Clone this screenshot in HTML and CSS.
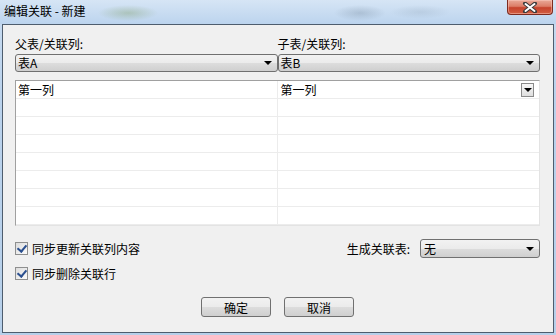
FILE: index.html
```html
<!DOCTYPE html>
<html lang="zh">

<head>
    <meta charset="UTF-8">
    <title>编辑关联 - 新建</title>
    <link rel="stylesheet" href="styles.css">
</head>

<body>
    <div class="window">
        <div class="titlebar">
            <span class="title">编辑关联 - 新建</span>
            <button class="btn-close" type="button">
                <svg width="16" height="11" viewBox="0 0 16 11">
                    <path d="M3 1.5 L13 9.5 M13 1.5 L3 9.5" stroke="#3b3b3b" stroke-width="4" stroke-linecap="round" />
                    <path d="M3.5 2 L12.5 9 M12.5 2 L3.5 9" stroke="#ffffff" stroke-width="2" stroke-linecap="round" />
                </svg>
            </button>
        </div>

        <div class="client">
            <div class="pair">
                <div class="pair-col">
                    <label class="field-label">父表/关联列:</label>
                    <div class="combo"><span>表A</span><i class="arrow"></i></div>
                </div>
                <div class="pair-col">
                    <label class="field-label">子表/关联列:</label>
                    <div class="combo"><span>表B</span><i class="arrow"></i></div>
                </div>
            </div>

            <div class="grid">
                <div class="grid-row">
                    <div class="cell">第一列</div>
                    <div class="cell cell-edit">第一列<span class="cell-drop"><i class="arrow"></i></span></div>
                </div>
                <div class="grid-row"><div class="cell"></div><div class="cell"></div></div>
                <div class="grid-row"><div class="cell"></div><div class="cell"></div></div>
                <div class="grid-row"><div class="cell"></div><div class="cell"></div></div>
                <div class="grid-row"><div class="cell"></div><div class="cell"></div></div>
                <div class="grid-row"><div class="cell"></div><div class="cell"></div></div>
                <div class="grid-row"><div class="cell"></div><div class="cell"></div></div>
                <div class="grid-row"><div class="cell"></div><div class="cell"></div></div>
            </div>

            <div class="options-row">
                <label class="check"><span class="box"></span>同步更新关联列内容</label>
                <div class="gen">
                    <span class="gen-label">生成关联表:</span>
                    <div class="combo combo-small"><span>无</span><i class="arrow"></i></div>
                </div>
            </div>
            <div class="options-row second">
                <label class="check"><span class="box"></span>同步删除关联行</label>
            </div>

            <div class="buttons">
                <button type="button" class="btn">确定</button>
                <button type="button" class="btn">取消</button>
            </div>
        </div>
    </div>
</body>

</html>
```

FILE: styles.css
```css
:root {
    --face: #f0f0f0;
    --frame: #bcd3ec;
    --text: #000;
    --grid-line: #ececec;
}

* {
    box-sizing: border-box;
}

body {
    margin: 0;
    font-family: "Noto Sans CJK SC", "Liberation Sans", sans-serif;
    font-size: 12px;
    color: var(--text);
}

.window {
    width: 556px;
    height: 335px;
    background: linear-gradient(to bottom, #c9dcf1 0%, #bad2ec 30%, #b7d0ea 100%);
    display: flex;
    flex-direction: column;
}

/* 标题栏 */
.titlebar {
    height: 24px;
    display: flex;
    align-items: flex-start;
    background:
        radial-gradient(ellipse 30px 8px at 128px 13px, rgba(120, 150, 90, 0.35), transparent),
        radial-gradient(ellipse 26px 8px at 360px 13px, rgba(90, 110, 130, 0.25), transparent),
        radial-gradient(ellipse 30px 7px at 420px 12px, rgba(150, 170, 190, 0.3), transparent),
        linear-gradient(to bottom, #d6e5f5, #bcd4ee);
}

.title {
    padding: 3px 0 0 4px;
    font-size: 12px;
    line-height: 16px;
    color: #000;
}

.btn-close {
    margin-left: auto;
    margin-right: 3px;
    width: 46px;
    height: 15px;
    padding: 0;
    border: 1px solid #7d2b1f;
    border-top: none;
    border-radius: 0 0 4px 4px;
    background: linear-gradient(to bottom, #e9a998 0%, #dc7d67 45%, #c6432c 55%, #d25f43 100%);
    box-shadow: inset 0 0 0 1px rgba(255, 210, 200, 0.45);
    display: flex;
    justify-content: center;
    align-items: center;
}

/* 客户区 */
.client {
    flex: 1;
    margin: 0 2px 2px 2px;
    background: var(--face);
    border: 1px solid #4e5d6e;
    padding: 12px 13px 0 12px;
    display: flex;
    flex-direction: column;
}

.pair {
    display: flex;
}

.pair-col {
    flex: 1;
    display: flex;
    flex-direction: column;
    gap: 3px;
}

.field-label {
    line-height: 14px;
}

.combo {
    height: 18px;
    border: 1px solid #707070;
    border-radius: 3px;
    background: linear-gradient(to bottom, #f2f2f2 0%, #ebebeb 50%, #dddddd 50%, #cfcfcf 100%);
    display: flex;
    align-items: center;
    padding: 0 5px 0 2px;
    line-height: 14px;
}

.combo span {
    flex: 1;
}

.arrow {
    width: 0;
    height: 0;
    border-left: 4px solid transparent;
    border-right: 4px solid transparent;
    border-top: 4px solid #000;
}

/* 表格 */
.grid {
    margin-top: 8px;
    border-top: 1px solid #a0a0a0;
    border-left: 1px solid #a0a0a0;
    border-right: 1px solid #e3e3e3;
    border-bottom: 1px solid #e3e3e3;
    background: #fff;
}

.grid-row {
    display: flex;
    height: 18px;
    border-bottom: 1px solid var(--grid-line);
}

.cell {
    flex: 1;
    padding: 0 2px;
    line-height: 16px;
    display: flex;
    align-items: center;
}

.cell:first-child {
    border-right: 1px solid var(--grid-line);
}

.cell-edit {
    padding-left: 3px;
}

.cell-drop {
    margin-left: auto;
    margin-right: 3px;
    width: 13px;
    height: 14px;
    border: 1px solid #8a8a8a;
    background: linear-gradient(to bottom, #f7f7f7, #dedede);
    display: flex;
    justify-content: center;
    align-items: center;
}

/* 选项 */
.options-row {
    margin-top: 13px;
    height: 19px;
    display: flex;
    align-items: center;
    justify-content: space-between;
}

.options-row.second {
    margin-top: 6px;
    height: 18px;
}

.check {
    display: flex;
    align-items: center;
    gap: 4px;
}

.box {
    width: 13px;
    height: 13px;
    border: 1px solid #8e8f8f;
    background: linear-gradient(135deg, #dcdcdc, #fbfbfb);
    position: relative;
}

.box::after {
    content: "";
    position: absolute;
    left: 3px;
    top: 0;
    width: 4px;
    height: 7px;
    border-right: 2px solid #2a4f8f;
    border-bottom: 2px solid #2a4f8f;
    transform: rotate(40deg);
}

.gen {
    display: flex;
    align-items: center;
    gap: 10px;
}

.combo-small {
    width: 120px;
    height: 19px;
    padding-left: 3px;
}

/* 按钮 */
.buttons {
    margin-top: 15px;
    display: flex;
    justify-content: center;
    gap: 13px;
}

.btn {
    width: 70px;
    height: 20px;
    padding: 0;
    border: 1px solid #707070;
    border-radius: 3px;
    background: linear-gradient(to bottom, #f2f2f2 0%, #ebebeb 50%, #dddddd 50%, #cfcfcf 100%);
    font-family: inherit;
    font-size: 12px;
    color: #000;
}
```
